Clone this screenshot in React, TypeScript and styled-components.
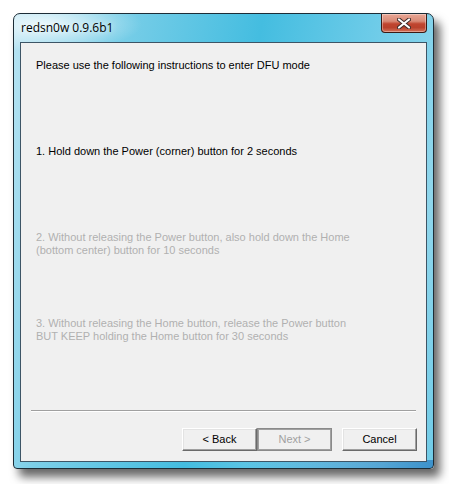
import * as React from 'react'
import styled, { createGlobalStyle } from 'styled-components';

const GlobalStyle = createGlobalStyle`
	body {
		margin: 0;
		background: #ffffff;
	}
`

const Page = styled.div`
	width: 449px;
	height: 484px;
	padding: 13px 0 0 13px;
	box-sizing: border-box;
`

const Window = styled.div`
	width: 421px;
	height: 456px;
	box-sizing: border-box;
	border: 1px solid #1c2c36;
	border-radius: 7px 7px 4px 4px;
	background:
		radial-gradient(ellipse 140px 40px at 30px 10px, rgba(255, 255, 255, 0.75), rgba(255, 255, 255, 0) 70%),
		linear-gradient(90deg, rgba(170, 214, 246, 0) 0%, rgba(170, 214, 246, 0) 55%, rgba(56, 140, 200, 0.9) 100%) bottom / 100% 8px no-repeat,
		linear-gradient(100deg, #b8e3f2 0%, #7ccfe8 20%, #44bde0 50%, #6ccbe8 72%, #8fd6ec 90%, #6fcbe7 100%);
	box-shadow: 6px 8px 10px rgba(0, 0, 0, 0.6);
	display: flex;
	flex-direction: column;
	padding: 0 6px 6px 6px;
`

const TitleBar = styled.div`
	height: 28px;
	display: flex;
	justify-content: space-between;
	align-items: flex-start;
`

const Title = styled.span`
	font-family: "Open Sans", "Noto Sans", sans-serif;
	font-size: 12px;
	color: #000000;
	margin: 5px 0 0 1px;
	text-shadow: 0 0 6px rgba(255, 255, 255, 0.9);
`

const CloseButton = styled.div`
	width: 46px;
	height: 19px;
	box-sizing: border-box;
	border: 1px solid #3b1a14;
	border-top: none;
	border-radius: 0 0 4px 4px;
	background: linear-gradient(180deg, #e9a796 0%, #d88a76 40%, #c0452f 55%, #b9422c 75%, #d3725a 100%);
	box-shadow: inset 0 0 0 1px rgba(255, 255, 255, 0.35);
	display: flex;
	justify-content: center;
	align-items: center;
`

const Client = styled.div`
	flex: 1;
	border: 1px solid #3d5566;
	background: #f0f0f0;
	display: flex;
	flex-direction: column;
	font-family: "Liberation Sans", Arial, sans-serif;
	font-size: 11px;
	line-height: 13px;
`

const Body = styled.div`
	padding: 16px 15px 0 15px;
	display: flex;
	flex-direction: column;
`

const Step = styled.p<{ $gap: number; $disabled?: boolean }>`
	margin: ${p => p.$gap}px 0 0 0;
	color: ${p => (p.$disabled ? '#b0b0b0' : '#000000')};
	white-space: pre-line;
`

const Footer = styled.div`
	margin-top: auto;
	display: flex;
	flex-direction: column;
`

const Separator = styled.div`
	margin: 0 10px;
	border-top: 1px solid #a0a0a0;
	border-bottom: 1px solid #ffffff;
`

const Buttons = styled.div`
	display: flex;
	justify-content: flex-end;
	padding: 16px 9px 10px 0;
	gap: 10px;
`

const Pair = styled.div`
	display: flex;
`

const Button = styled.div<{ $disabled?: boolean }>`
	width: 75px;
	height: 23px;
	box-sizing: border-box;
	display: flex;
	justify-content: center;
	align-items: center;
	background: #f0f0f0;
	color: ${p => (p.$disabled ? '#a0a0a0' : '#000000')};
	border: 1px solid;
	border-color: ${p => (p.$disabled ? '#8a8a8a' : '#ffffff #6a6a6a #6a6a6a #ffffff')};
	box-shadow: ${p => (p.$disabled
		? 'inset 0 0 0 1px #a0a0a0'
		: 'inset -1px -1px 0 #a0a0a0, inset 1px 1px 0 #e3e3e3')};
	font-size: 11px;
`

const CloseIcon = () => (
	<svg width="14" height="11" viewBox="0 0 14 11">
		<path d="M2 1.5 L12 9.5 M12 1.5 L2 9.5" stroke="#3a2a28" strokeWidth="4" strokeLinecap="round" />
		<path d="M2 1.5 L12 9.5 M12 1.5 L2 9.5" stroke="#ffffff" strokeWidth="2.2" strokeLinecap="round" />
	</svg>
)

const App = () => {
	return (
		<Page>
			<GlobalStyle />
			<Window>
				<TitleBar>
					<Title>redsn0w 0.9.6b1</Title>
					<CloseButton><CloseIcon /></CloseButton>
				</TitleBar>
				<Client>
					<Body>
						<Step $gap={0}>Please use the following instructions to enter DFU mode</Step>
						<Step $gap={73}>1. Hold down the Power (corner) button for 2 seconds</Step>
						<Step $gap={73} $disabled>{"2. Without releasing the Power button, also hold down the Home\n(bottom center) button for 10 seconds"}</Step>
						<Step $gap={60} $disabled>{"3. Without releasing the Home button, release the Power button\nBUT KEEP holding the Home button for 30 seconds"}</Step>
					</Body>
					<Footer>
						<Separator />
						<Buttons>
							<Pair>
								<Button>&lt; Back</Button>
								<Button $disabled>Next &gt;</Button>
							</Pair>
							<Button>Cancel</Button>
						</Buttons>
					</Footer>
				</Client>
			</Window>
		</Page>
	)
}

export default App;
